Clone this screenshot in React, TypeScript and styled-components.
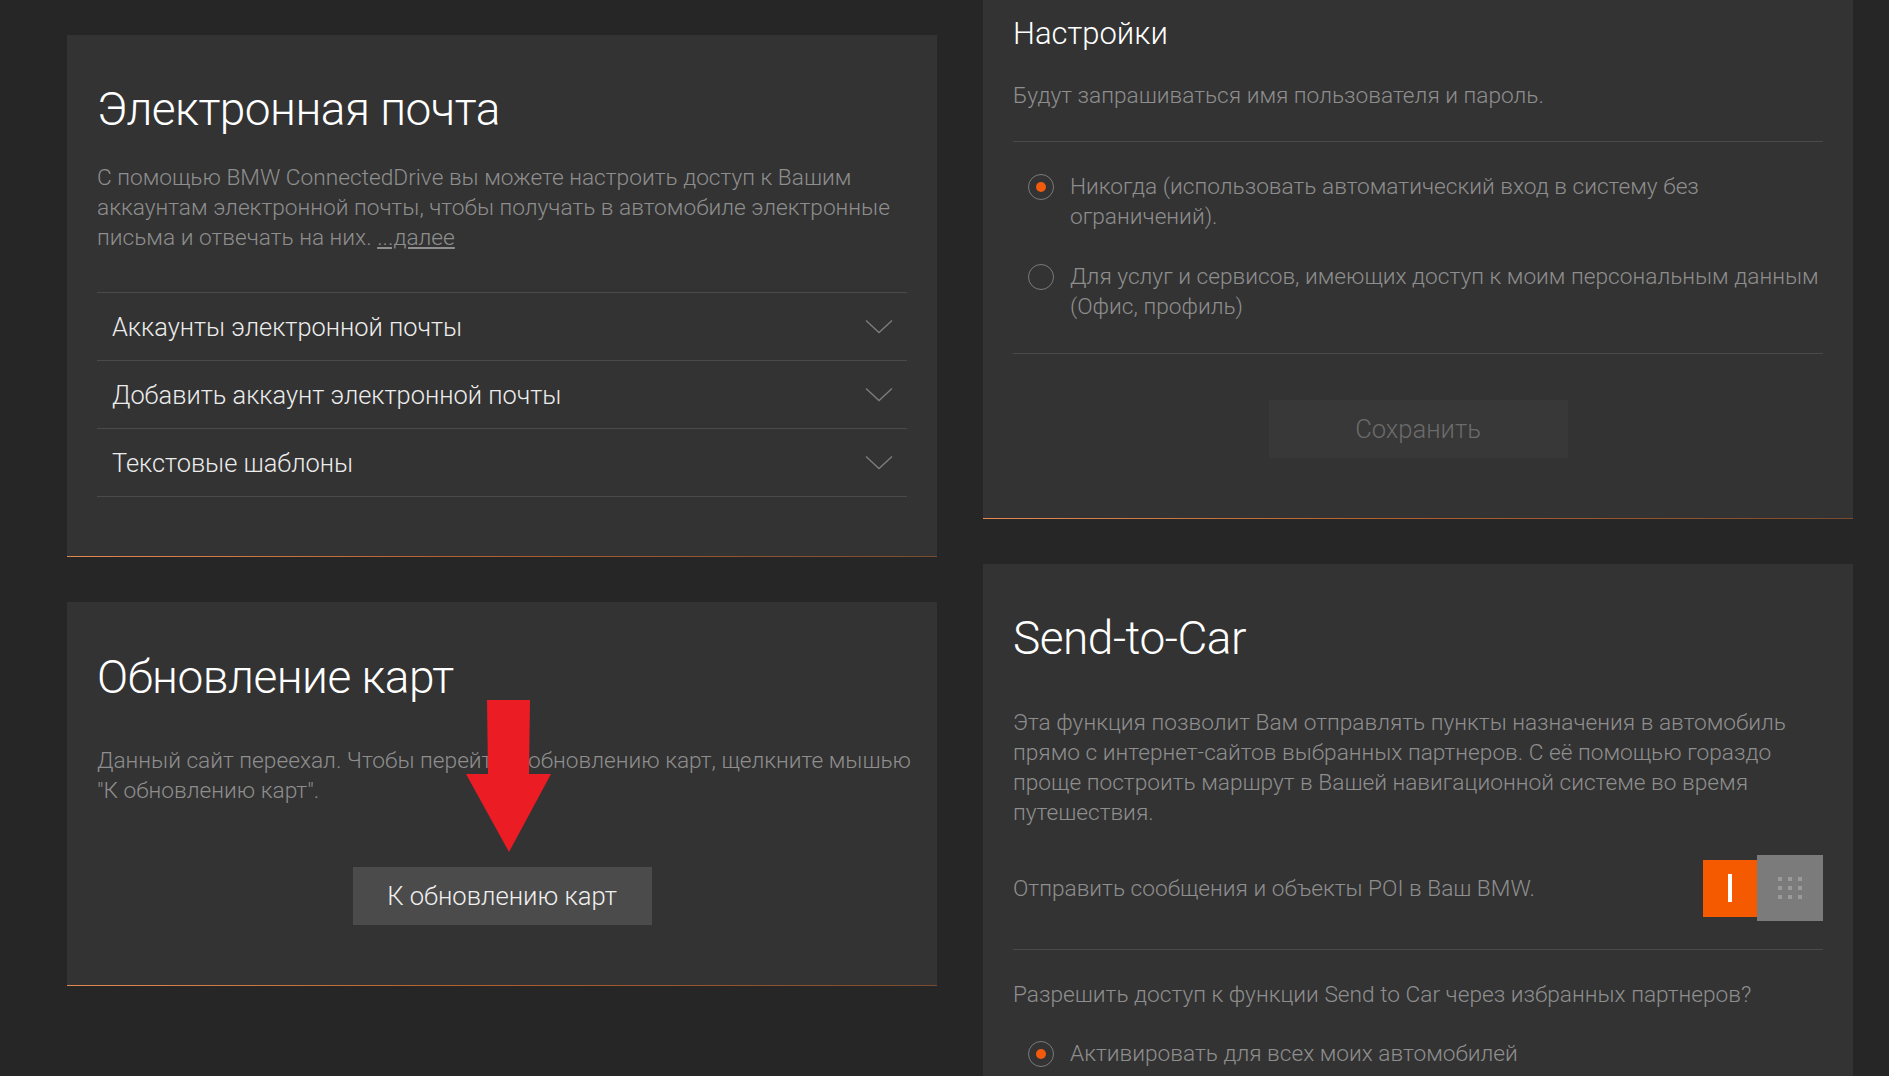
import styled, { createGlobalStyle } from "styled-components";

const GlobalStyle = createGlobalStyle`
  html, body {
    margin: 0;
    padding: 0;
    background: #262626;
    overflow: hidden;
  }
  body {
    font-family: Roboto, "Liberation Sans", Arial, sans-serif;
    -webkit-font-smoothing: antialiased;
  }
`;

const Page = styled.div`
  display: flex;
  align-items: flex-start;
  gap: 46px;
  padding-left: 67px;
  height: 1076px;
  overflow: hidden;
`;

const Column = styled.div<{ $top: number }>`
  width: 870px;
  display: flex;
  flex-direction: column;
  gap: 45px;
  padding-top: ${(p) => p.$top}px;
`;

const Panel = styled.section<{ $pt: number; $pb: number }>`
  position: relative;
  background: #333333;
  padding: ${(p) => p.$pt}px 30px ${(p) => p.$pb}px;
  &::after {
    content: "";
    position: absolute;
    left: 0;
    right: 0;
    bottom: 0;
    height: 1px;
    background: linear-gradient(to right, #e28a52, #b4602f 45%, #7a4b30);
  }
`;

const Title = styled.h2`
  margin: 0;
  font-size: 46px;
  line-height: 55px;
  font-weight: 300;
  color: #ffffff;
  letter-spacing: -0.5px;
`;

const SubTitle = styled.h3`
  margin: 0;
  font-size: 31px;
  line-height: 40px;
  font-weight: 300;
  color: #ffffff;
`;

const Text = styled.p<{ $mt: number }>`
  margin: ${(p) => p.$mt}px 0 0;
  font-size: 22.7px;
  line-height: 30px;
  font-weight: 300;
  color: #8e8e8e;
  white-space: nowrap;
  a {
    color: #8e8e8e;
    text-decoration: underline;
  }
`;

const Accordion = styled.div<{ $mt: number }>`
  margin-top: ${(p) => p.$mt}px;
  border-top: 1px solid #4a4a4a;
`;

const AccRow = styled.div`
  height: 67px;
  display: flex;
  align-items: center;
  justify-content: space-between;
  padding: 0 14px 0 15px;
  border-bottom: 1px solid #4a4a4a;
  font-size: 25.4px;
  font-weight: 300;
  color: #ececec;
`;

const Chevron = () => (
  <svg width="28" height="15" viewBox="0 0 28 15">
    <polyline points="1,1.5 14,13.5 27,1.5" fill="none" stroke="#7e7e7e" strokeWidth="1.3" />
  </svg>
);

const Center = styled.div<{ $mt: number }>`
  margin-top: ${(p) => p.$mt}px;
  display: flex;
  justify-content: center;
`;

const Button = styled.button<{ $muted?: boolean }>`
  width: 299px;
  height: 58px;
  border: none;
  padding: 0;
  font-family: inherit;
  font-size: 25.6px;
  font-weight: 300;
  background: ${(p) => (p.$muted ? "#383838" : "#4b4b4b")};
  color: ${(p) => (p.$muted ? "#6b6b6b" : "#f0f0f0")};
`;

const Divider = styled.div<{ $mt: number }>`
  margin-top: ${(p) => p.$mt}px;
  height: 1px;
  background: #4a4a4a;
`;

const RadioRow = styled.div<{ $mt: number }>`
  margin-top: ${(p) => p.$mt}px;
  display: flex;
  align-items: flex-start;
  gap: 16px;
  padding-left: 15px;
  font-size: 22.7px;
  line-height: 30px;
  font-weight: 300;
  color: #8e8e8e;
  white-space: nowrap;
`;

const RadioCircle = styled.span<{ $checked?: boolean }>`
  flex: none;
  width: 26px;
  height: 26px;
  margin-top: 2px;
  box-sizing: border-box;
  border: 1px solid #7a7a7a;
  border-radius: 50%;
  display: flex;
  align-items: center;
  justify-content: center;
  &::after {
    content: "";
    width: 10px;
    height: 10px;
    border-radius: 50%;
    background: ${(p) => (p.$checked ? "#f25a0c" : "transparent")};
  }
`;

const ToggleRow = styled.div<{ $mt: number }>`
  margin-top: ${(p) => p.$mt}px;
  display: flex;
  align-items: center;
  justify-content: space-between;
  height: 66px;
  font-size: 22.7px;
  font-weight: 300;
  color: #8e8e8e;
`;

const Toggle = styled.div`
  display: flex;
  align-items: center;
`;

const ToggleOn = styled.div`
  width: 54px;
  height: 57px;
  background: #f55a00;
  display: flex;
  align-items: center;
  justify-content: center;
  &::after {
    content: "";
    width: 4px;
    height: 28px;
    background: #ffffff;
  }
`;

const ToggleKnob = styled.div`
  width: 66px;
  height: 66px;
  background: #7b7b7b;
  display: grid;
  grid-template-columns: repeat(3, 4px);
  grid-auto-rows: 4px;
  gap: 5px 6px;
  align-content: center;
  justify-content: center;
  span {
    background: #9a9a9a;
  }
`;

const Arrow = styled.svg`
  position: absolute;
  left: 399px;
  top: 98px;
`;

const App = () => {
  return (
    <>
      <GlobalStyle />
      <Page>
        <Column $top={35}>
          <Panel $pt={47} $pb={60}>
            <Title>Электронная почта</Title>
            <Text $mt={26}>
              С помощью BMW ConnectedDrive вы можете настроить доступ к Вашим
              <br />
              аккаунтам электронной почты, чтобы получать в автомобиле электронные
              <br />
              письма и отвечать на них. <a>...далее</a>
            </Text>
            <Accordion $mt={39}>
              {["Аккаунты электронной почты", "Добавить аккаунт электронной почты", "Текстовые шаблоны"].map(
                (label) => (
                  <AccRow key={label}>
                    <span>{label}</span>
                    <Chevron />
                  </AccRow>
                )
              )}
            </Accordion>
          </Panel>
          <Panel $pt={48} $pb={61}>
            <Title>Обновление карт</Title>
            <Text $mt={41}>
              Данный сайт переехал. Чтобы перейти к обновлению карт, щелкните мышью
              <br />
              "К обновлению карт".
            </Text>
            <Center $mt={61}>
              <Button>К обновлению карт</Button>
            </Center>
            <Arrow width="85" height="152" viewBox="0 0 85 152">
              <polygon points="21,0 64,0 63,74 85,74 43,152 0,74 22,74" fill="#ec1c24" />
            </Arrow>
          </Panel>
        </Column>
        <Column $top={0}>
          <Panel $pt={14} $pb={61}>
            <SubTitle>Настройки</SubTitle>
            <Text $mt={27}>Будут запрашиваться имя пользователя и пароль.</Text>
            <Divider $mt={30} />
            <RadioRow $mt={30}>
              <RadioCircle $checked />
              <span>
                Никогда (использовать автоматический вход в систему без
                <br />
                ограничений).
              </span>
            </RadioRow>
            <RadioRow $mt={30}>
              <RadioCircle />
              <span>
                Для услуг и сервисов, имеющих доступ к моим персональным данным
                <br />
                (Офис, профиль)
              </span>
            </RadioRow>
            <Divider $mt={31} />
            <Center $mt={46}>
              <Button $muted>Сохранить</Button>
            </Center>
          </Panel>
          <Panel $pt={47} $pb={60}>
            <Title>Send-to-Car</Title>
            <Text $mt={42}>
              Эта функция позволит Вам отправлять пункты назначения в автомобиль
              <br />
              прямо с интернет-сайтов выбранных партнеров. С её помощью гораздо
              <br />
              проще построить маршрут в Вашей навигационной системе во время
              <br />
              путешествия.
            </Text>
            <ToggleRow $mt={27}>
              <span>Отправить сообщения и объекты POI в Ваш BMW.</span>
              <Toggle>
                <ToggleOn />
                <ToggleKnob>
                  {Array.from({ length: 9 }).map((_, i) => (
                    <span key={i} />
                  ))}
                </ToggleKnob>
              </Toggle>
            </ToggleRow>
            <Divider $mt={28} />
            <Text $mt={30}>Разрешить доступ к функции Send to Car через избранных партнеров?</Text>
            <RadioRow $mt={29}>
              <RadioCircle $checked />
              <span>Активировать для всех моих автомобилей</span>
            </RadioRow>
          </Panel>
        </Column>
      </Page>
    </>
  );
};

export default App;
